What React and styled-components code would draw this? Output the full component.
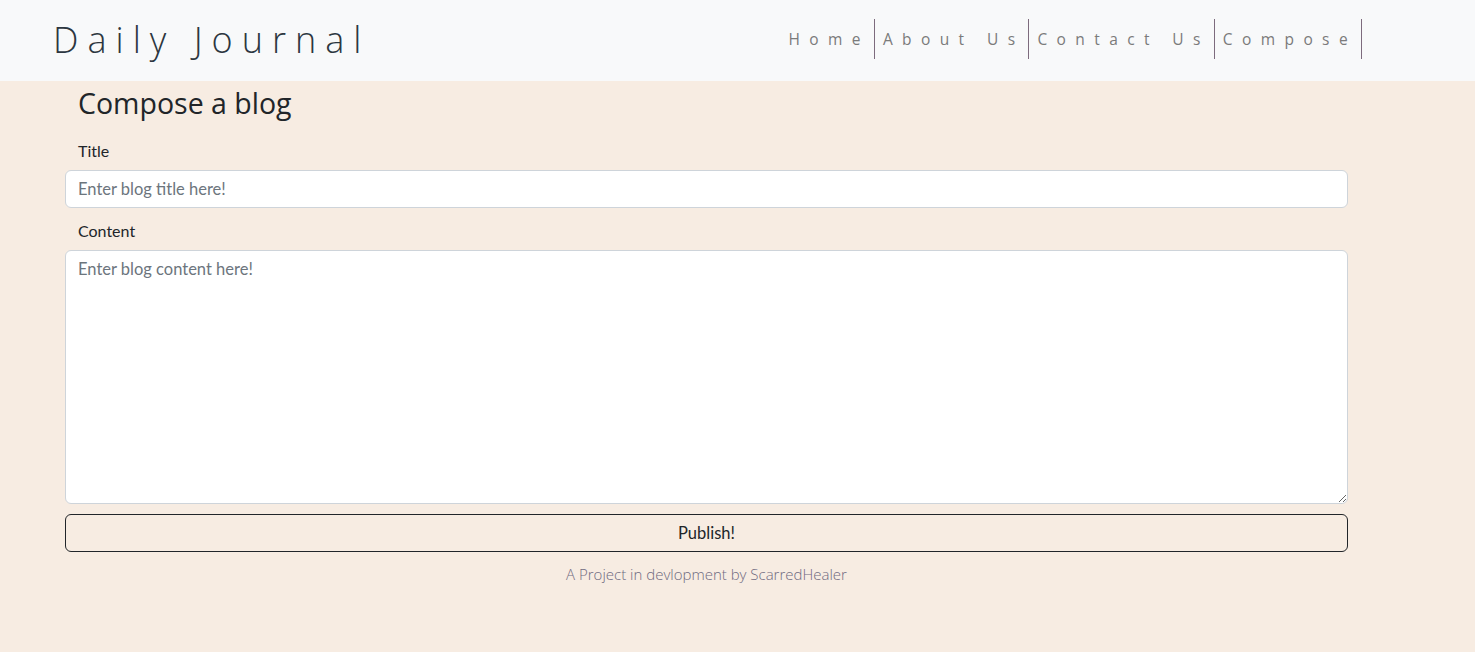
import styled, { createGlobalStyle } from 'styled-components';

const GlobalStyle = createGlobalStyle`
  html, body {
    margin: 0;
    padding: 0;
    background-color: #f7ece2;
    font-family: Lato, 'Open Sans', sans-serif;
  }
  * {
    box-sizing: border-box;
  }
`;

const Header = styled.nav`
  height: 81px;
  background-color: #f8f9fa;
  display: flex;
  align-items: center;
  justify-content: space-between;
  padding: 0 113px 3px 53px;
`;

const Brand = styled.a`
  font-family: 'Open Sans', sans-serif;
  font-weight: 300;
  font-size: 36px;
  letter-spacing: 9px;
  color: #2c3640;
  text-decoration: none;
`;

const NavList = styled.ul`
  display: flex;
  list-style: none;
  margin: 0;
  padding: 0;
`;

const NavItem = styled.li`
  height: 40px;
  display: flex;
  align-items: center;
  padding: 0 4px 0 8px;
  border-right: 1px solid #7d6b7d;
`;

const NavLink = styled.a`
  font-family: 'Open Sans', sans-serif;
  font-size: 15.5px;
  letter-spacing: 9.4px;
  color: #7b7b7b;
  text-decoration: none;
`;

const Main = styled.main`
  width: 1283px;
  margin-left: 65px;
  display: flex;
  flex-direction: column;
`;

const Heading = styled.h1`
  font-family: 'Open Sans', sans-serif;
  font-weight: 500;
  font-size: 28.5px;
  color: #212529;
  margin: 2px 0 0 13px;
  line-height: 40px;
`;

const Label = styled.label`
  display: block;
  font-size: 16px;
  color: #212529;
  margin: ${props => props.top} 0 8px 13px;
  line-height: 22px;
`;

const Input = styled.input`
  width: 100%;
  height: 38px;
  padding: 6px 12px;
  font-family: Lato, sans-serif;
  font-size: 16.5px;
  color: #212529;
  background: #fff;
  border: 1px solid #ced4da;
  border-radius: 6px;
  outline: none;

  &::placeholder {
    color: #6c757d;
  }
`;

const TextArea = styled.textarea`
  width: 100%;
  height: 254px;
  padding: 8px 12px;
  font-family: Lato, sans-serif;
  font-size: 16.5px;
  color: #212529;
  background: #fff;
  border: 1px solid #ced4da;
  border-radius: 6px;
  outline: none;
  display: block;

  &::placeholder {
    color: #6c757d;
  }
`;

const Button = styled.button`
  margin-top: 10px;
  width: 100%;
  height: 38px;
  font-family: Lato, sans-serif;
  font-size: 16.5px;
  color: #212529;
  background: transparent;
  border: 1px solid #212529;
  border-radius: 6px;
  cursor: pointer;
`;

const Footer = styled.p`
  text-align: center;
  font-family: 'Open Sans', sans-serif;
  font-weight: 300;
  font-size: 15px;
  color: #6f6a80;
  margin: 12px 0 0;
`;

export default function App() {
  return (
    <>
      <GlobalStyle />
      <Header>
        <Brand href="#">Daily Journal</Brand>
        <NavList>
          {['Home', 'About Us', 'Contact Us', 'Compose'].map(item => (
            <NavItem key={item}>
              <NavLink href="#">{item}</NavLink>
            </NavItem>
          ))}
        </NavList>
      </Header>
      <Main>
        <Heading>Compose a blog</Heading>
        <Label top="17px">Title</Label>
        <Input placeholder="Enter blog title here!" />
        <Label top="12px">Content</Label>
        <TextArea placeholder="Enter blog content here!" />
        <Button>Publish!</Button>
        <Footer>A Project in devlopment by ScarredHealer</Footer>
      </Main>
    </>
  );
}
